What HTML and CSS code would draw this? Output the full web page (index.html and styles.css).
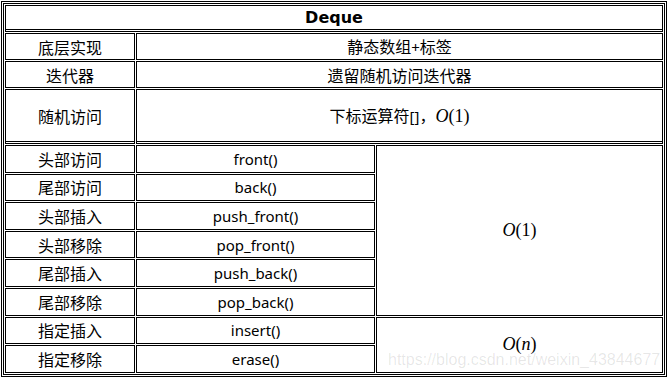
FILE: index.html
```html
<!DOCTYPE html>
<html lang="zh">
<head>
<meta charset="utf-8">
<title>Deque</title>
<link rel="stylesheet" href="styles.css">
</head>
<body>
<div class="page">
  <table class="grid">
    <colgroup>
      <col class="c1">
      <col class="c2">
      <col class="c3">
    </colgroup>
    <tr><th colspan="3" class="head">Deque</th></tr>
    <tr><td class="cn top">底层实现</td><td colspan="2" class="cn top">静态数组<span class="lat">+</span>标签</td></tr>
    <tr><td class="cn top">迭代器</td><td colspan="2" class="cn top">遗留随机访问迭代器</td></tr>
    <tr><td class="cn tall">随机访问</td><td colspan="2" class="cn tall">下标运算符<span class="lat">[]</span>，<span class="math"><i>O</i>(1)</span></td></tr>
    <tr><td class="cn low">头部访问</td><td class="fn low">front()</td><td rowspan="6" class="big"><span class="math"><i>O</i>(1)</span></td></tr>
    <tr><td class="cn low">尾部访问</td><td class="fn low">back()</td></tr>
    <tr><td class="cn low">头部插入</td><td class="fn low">push_front()</td></tr>
    <tr><td class="cn low">头部移除</td><td class="fn low">pop_front()</td></tr>
    <tr><td class="cn low">尾部插入</td><td class="fn low">push_back()</td></tr>
    <tr><td class="cn low">尾部移除</td><td class="fn low">pop_back()</td></tr>
    <tr><td class="cn low">指定插入</td><td class="fn low">insert()</td><td rowspan="2" class="big"><span class="math"><i>O</i>(<i>n</i>)</span></td></tr>
    <tr><td class="cn low">指定移除</td><td class="fn low">erase()</td></tr>
  </table>
  <div class="watermark">https://blog.csdn.net/weixin_43844677</div>
</div>
</body>
</html>
```
FILE: styles.css
```css
html, body {
  margin: 0;
  padding: 0;
  background: #fff;
}
.page {
  position: relative;
  width: 669px;
  height: 378px;
  overflow: hidden;
}
.grid {
  margin: 1px 0 0 1px;
  width: 666px;
  table-layout: fixed;
  border: 3px double #000;
  border-spacing: 1px;
  color: #000;
}
.c1 { width: 130px; }
.c2 { width: 239px; }
.c3 { width: 287px; }
.grid th, .grid td {
  border: 1px solid #000;
  padding: 0;
  text-align: center;
  vertical-align: middle;
  box-sizing: content-box;
  line-height: 18px;
}
.head {
  height: 23px;
  font-family: "DejaVu Sans", sans-serif;
  font-weight: bold;
  font-size: 16px;
  border-bottom: 3px double #000 !important;
}
.top { height: 25px; }
.tall {
  height: 51px;
  border-bottom: 3px double #000 !important;
}
.low { height: 25.6px; }
.cn {
  font-family: "Noto Sans CJK SC", sans-serif;
  font-size: 16px;
}
.lat {
  font-family: "Noto Sans", sans-serif;
  font-size: 15px;
}
.fn {
  font-family: "Noto Sans", sans-serif;
  font-size: 15px;
}
.math {
  font-family: "Liberation Serif", serif;
  font-size: 18px;
}
.math i {
  font-style: italic;
}
.big {
  font-size: 16px;
}
.watermark {
  position: absolute;
  left: 388px;
  top: 351px;
  font-family: "Liberation Sans", sans-serif;
  font-size: 16px;
  color: rgba(0, 0, 0, 0.1);
  white-space: nowrap;
}
```
